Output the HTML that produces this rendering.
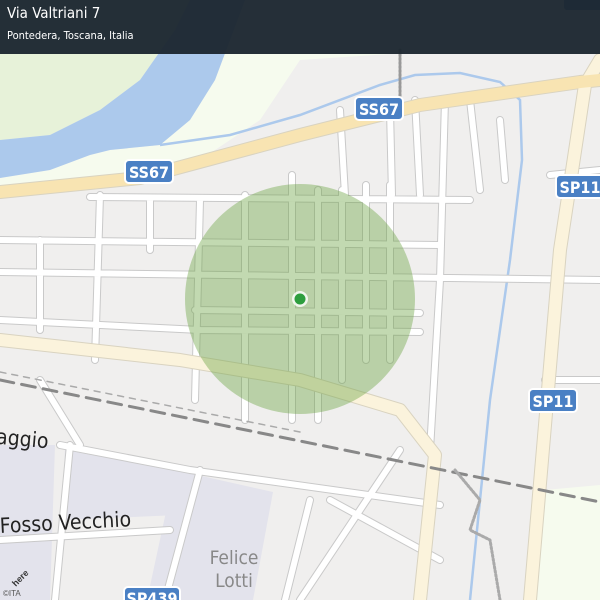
<!DOCTYPE html>
<html><head><meta charset="utf-8"><style>
html,body{margin:0;padding:0;width:600px;height:600px;overflow:hidden;background:#f0efee}
svg{position:absolute;left:0;top:0}
.hdr{position:absolute;left:0;top:0;width:600px;height:54px;background:rgba(28,38,48,0.96);color:#fff;font-family:"DejaVu Sans Condensed","Liberation Sans",sans-serif}
.t1{position:absolute;left:7px;top:4px;font-size:15px}
.t2{position:absolute;left:7px;top:29px;font-size:11px}
.lbl{font-family:"DejaVu Sans Condensed","Liberation Sans",sans-serif}
</style></head><body>
<svg width="600" height="600" viewBox="0 0 600 600">
<rect width="600" height="600" fill="#f0efee"/>
<polygon points="0,0 200,0 175,30 140,80 100,110 50,135 0,140" fill="#e7f2d9"/>
<polygon points="245,0 600,0 600,40 300,60 260,120 200,160 140,175 0,190 0,178 50,170 90,155 110,150 160,145 190,120 215,80" fill="#f6fbee"/>
<polygon points="190,0 245,0 215,80 190,120 160,145 110,150 90,155 50,170 0,178 0,140 50,135 100,110 140,80 175,30" fill="#acc9ec"/>
<polyline points="160,145 230,135 300,115 380,85 415,75 460,73 500,82 520,100 522,160 510,260 490,400 480,500 470,600" fill="none" stroke="#acc9ec" stroke-width="2.5"/>
<polygon points="0,445 55,445 50,600 0,600" fill="#e3e3ec"/>
<polygon points="65,448 190,470 178,515 62,520" fill="#e3e3ec"/>
<polygon points="175,470 273,492 253,600 147,600" fill="#e3e3ec"/>
<polygon points="545,490 600,485 600,600 535,600" fill="#f6fbee"/>
<g fill="none" stroke-linecap="round" stroke-linejoin="round">
<g stroke="#c9c9c9" stroke-width="8">
<path d="M0,240 L440,245 M0,272 L600,280 M90,197 L470,200 M0,320 L200,330 M195,310 L420,313 M195,330 L420,332 M292,175 L292,420 M318,190 L318,420 M342,190 L342,380 M366,185 L366,360 M390,185 L390,360 M445,100 L440,280 L430,450 M340,110 L345,195 M390,110 L392,195 M415,100 L420,195 M470,100 L480,190 M245,195 L245,420 M200,200 L195,400 M150,200 L150,250 M100,195 L95,360 M40,240 L40,330 M60,445 L190,470 L440,505 M0,540 L170,530 M70,445 L55,600 M200,470 L165,600 M310,500 L285,600 M330,500 L440,560 M400,450 L300,600 M500,120 L505,180 M600,170 L550,175 M600,380 L545,380 M40,380 L80,445"/>
</g>
<g stroke="#ffffff" stroke-width="6">
<path d="M0,240 L440,245 M0,272 L600,280 M90,197 L470,200 M0,320 L200,330 M195,310 L420,313 M195,330 L420,332 M292,175 L292,420 M318,190 L318,420 M342,190 L342,380 M366,185 L366,360 M390,185 L390,360 M445,100 L440,280 L430,450 M340,110 L345,195 M390,110 L392,195 M415,100 L420,195 M470,100 L480,190 M245,195 L245,420 M200,200 L195,400 M150,200 L150,250 M100,195 L95,360 M40,240 L40,330 M60,445 L190,470 L440,505 M0,540 L170,530 M70,445 L55,600 M200,470 L165,600 M310,500 L285,600 M330,500 L440,560 M400,450 L300,600 M500,120 L505,180 M600,170 L550,175 M600,380 L545,380 M40,380 L80,445"/>
</g>
<g stroke="#d9d3c0" stroke-width="14"><path d="M0,192 L140,178 L300,135 L420,105 L580,82 L600,80 M600,60 L585,85 L560,250 L530,600 M0,340 L180,360 L300,380 L400,410 L435,455 L420,600"/></g>
<g stroke="#fbf3dc" stroke-width="12"><path d="M0,340 L180,360 L300,380 L400,410 L435,455 L420,600 M600,60 L585,85 L560,250 L530,600"/></g>
<g stroke="#f8e4b2" stroke-width="12"><path d="M0,192 L140,178 L300,135 L420,105 L580,82 L600,80"/></g>
<path d="M0,380 L600,502" stroke="#888" stroke-width="3" stroke-dasharray="14,8"/>
<path d="M0,372 L300,432" stroke="#aaa" stroke-width="1.5" stroke-dasharray="6,6"/>
<path d="M400,50 L400,110" stroke="#999" stroke-width="3" stroke-dasharray="2,2"/>
<path d="M455,470 L480,500 L470,530 L490,540 L500,600" stroke="#aaa" stroke-width="3" stroke-dasharray="2,2"/>
</g>
<circle cx="300" cy="299" r="115" fill="rgba(110,165,70,0.42)"/>
<circle cx="300" cy="299" r="8" fill="#fff" opacity="0.8"/>
<circle cx="300" cy="299" r="5.5" fill="#2e9e3e"/>
<g class="lbl" font-weight="bold" font-size="16" fill="#fff" text-anchor="middle">
<rect x="125" y="160" width="48" height="23" rx="4" fill="#4a80c4" stroke="#fff" stroke-width="2"/><text x="149" y="178">SS67</text>
<rect x="355" y="97" width="48" height="23" rx="4" fill="#4a80c4" stroke="#fff" stroke-width="2"/><text x="379" y="115">SS67</text>
<rect x="556" y="175" width="48" height="23" rx="4" fill="#4a80c4" stroke="#fff" stroke-width="2"/><text x="580" y="193">SP11</text>
<rect x="529" y="389" width="48" height="23" rx="4" fill="#4a80c4" stroke="#fff" stroke-width="2"/><text x="553" y="407">SP11</text>
<rect x="124" y="587" width="56" height="23" rx="4" fill="#4a80c4" stroke="#fff" stroke-width="2"/><text x="152" y="604">SP439</text>
<rect x="563" y="-12" width="48" height="23" rx="4" fill="#4a80c4" stroke="#fff" stroke-width="2"/>
</g>
<g class="lbl" fill="#222" font-size="21">
<text x="-4" y="444" transform="rotate(5 0 440)">aggio</text>
<text x="0" y="533" transform="rotate(-3 0 530)">Fosso  Vecchio</text>
</g>
<g class="lbl" fill="#888" font-size="19" text-anchor="middle">
<text x="234" y="564">Felice</text><text x="234" y="587">Lotti</text>
</g>
<text x="3" y="596" font-family="Liberation Sans,sans-serif" font-size="8" fill="#555">©ITA</text>
<text x="12" y="586" font-family="Liberation Sans,sans-serif" font-size="9" font-weight="bold" fill="#333" transform="rotate(-45 15 582)">here</text>
</svg>
<div class="hdr"><div class="t1">Via Valtriani 7</div><div class="t2">Pontedera, Toscana, Italia</div></div>
</body></html>
